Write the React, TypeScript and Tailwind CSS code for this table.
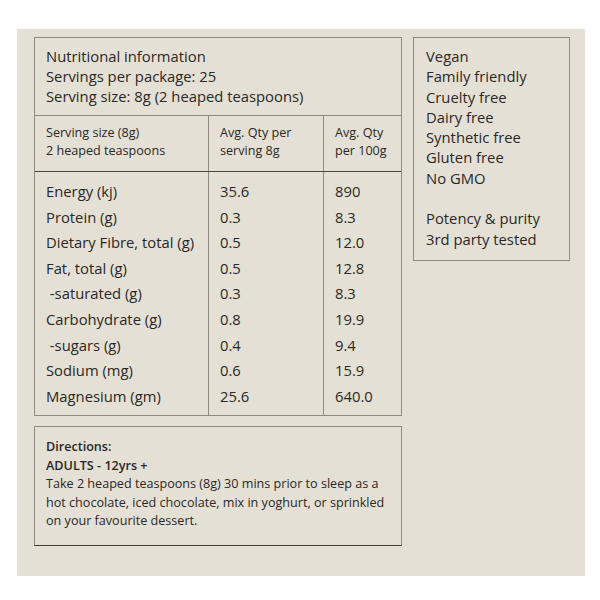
const rows: [string, string, string][] = [
  ["Energy (kj)", "35.6", "890"],
  ["Protein (g)", "0.3", "8.3"],
  ["Dietary Fibre, total (g)", "0.5", "12.0"],
  ["Fat, total (g)", "0.5", "12.8"],
  ["\u00a0-saturated (g)", "0.3", "8.3"],
  ["Carbohydrate (g)", "0.8", "19.9"],
  ["\u00a0-sugars (g)", "0.4", "9.4"],
  ["Sodium (mg)", "0.6", "15.9"],
  ["Magnesium (gm)", "25.6", "640.0"],
];

const badges = [
  "Vegan",
  "Family friendly",
  "Cruelty free",
  "Dairy free",
  "Synthetic free",
  "Gluten free",
  "No GMO",
];

export default function App() {
  return (
    <div className="w-[600px] h-[600px] bg-white pt-[29px] pl-[17px] font-['Open_Sans',sans-serif] text-[#2a2825]">
      <div className="w-[568px] h-[547px] bg-[#e5e0d6] pt-[8px] pl-[17px] flex gap-[11px] items-start">
        {/* Left column */}
        <div className="w-[368px] flex flex-col gap-[10px]">
          {/* Nutrition table */}
          <div className="border border-[#8f8a82]">
            <div className="px-[11px] pt-[8px] pb-[9px] text-[14.8px] leading-[20px]">
              <div>Nutritional information</div>
              <div>Servings per package: 25</div>
              <div>Serving size: 8g (2 heaped teaspoons)</div>
            </div>
            <div className="grid grid-cols-[174px_115px_1fr] border-t border-[#8f8a82] border-b border-b-[#4a4743] text-[12.6px] leading-[18px] h-[57px]">
              <div className="px-[11px] pt-[8px] border-r border-[#8f8a82]">
                Serving size (8g)
                <br />2 heaped teaspoons
              </div>
              <div className="px-[11px] pt-[8px] border-r border-[#8f8a82]">
                Avg. Qty per
                <br />serving 8g
              </div>
              <div className="px-[11px] pt-[8px]">
                Avg. Qty
                <br />per 100g
              </div>
            </div>
            <div className="grid grid-cols-[174px_115px_1fr] text-[14.8px] leading-[25.6px]">
              <div className="px-[11px] pt-[7px] pb-[6px] border-r border-[#8f8a82]">
                {rows.map((r) => (
                  <div key={r[0]}>{r[0]}</div>
                ))}
              </div>
              <div className="px-[11px] pt-[7px] pb-[6px] border-r border-[#8f8a82]">
                {rows.map((r) => (
                  <div key={r[0]}>{r[1]}</div>
                ))}
              </div>
              <div className="px-[11px] pt-[7px] pb-[6px]">
                {rows.map((r) => (
                  <div key={r[0]}>{r[2]}</div>
                ))}
              </div>
            </div>
          </div>

          {/* Directions */}
          <div className="border border-[#8f8a82] border-b-[#3f3c38] px-[11px] pt-[11px] pb-[14px] text-[12.6px] leading-[18.5px]">
            <div className="font-semibold">Directions:</div>
            <div className="font-semibold">ADULTS - 12yrs +</div>
            <p>
              Take 2 heaped teaspoons (8g) 30 mins prior to sleep as a hot chocolate, iced chocolate,
              mix in yoghurt, or sprinkled on your favourite dessert.
            </p>
          </div>
        </div>

        {/* Right column */}
        <div className="w-[157px] border border-[#8f8a82] px-[12px] pt-[8px] pb-[11px] text-[14.8px] leading-[20.3px]">
          {badges.map((b) => (
            <div key={b}>{b}</div>
          ))}
          <div className="h-[20.3px]" />
          <div>Potency &amp; purity</div>
          <div>3rd party tested</div>
        </div>
      </div>
    </div>
  );
}
